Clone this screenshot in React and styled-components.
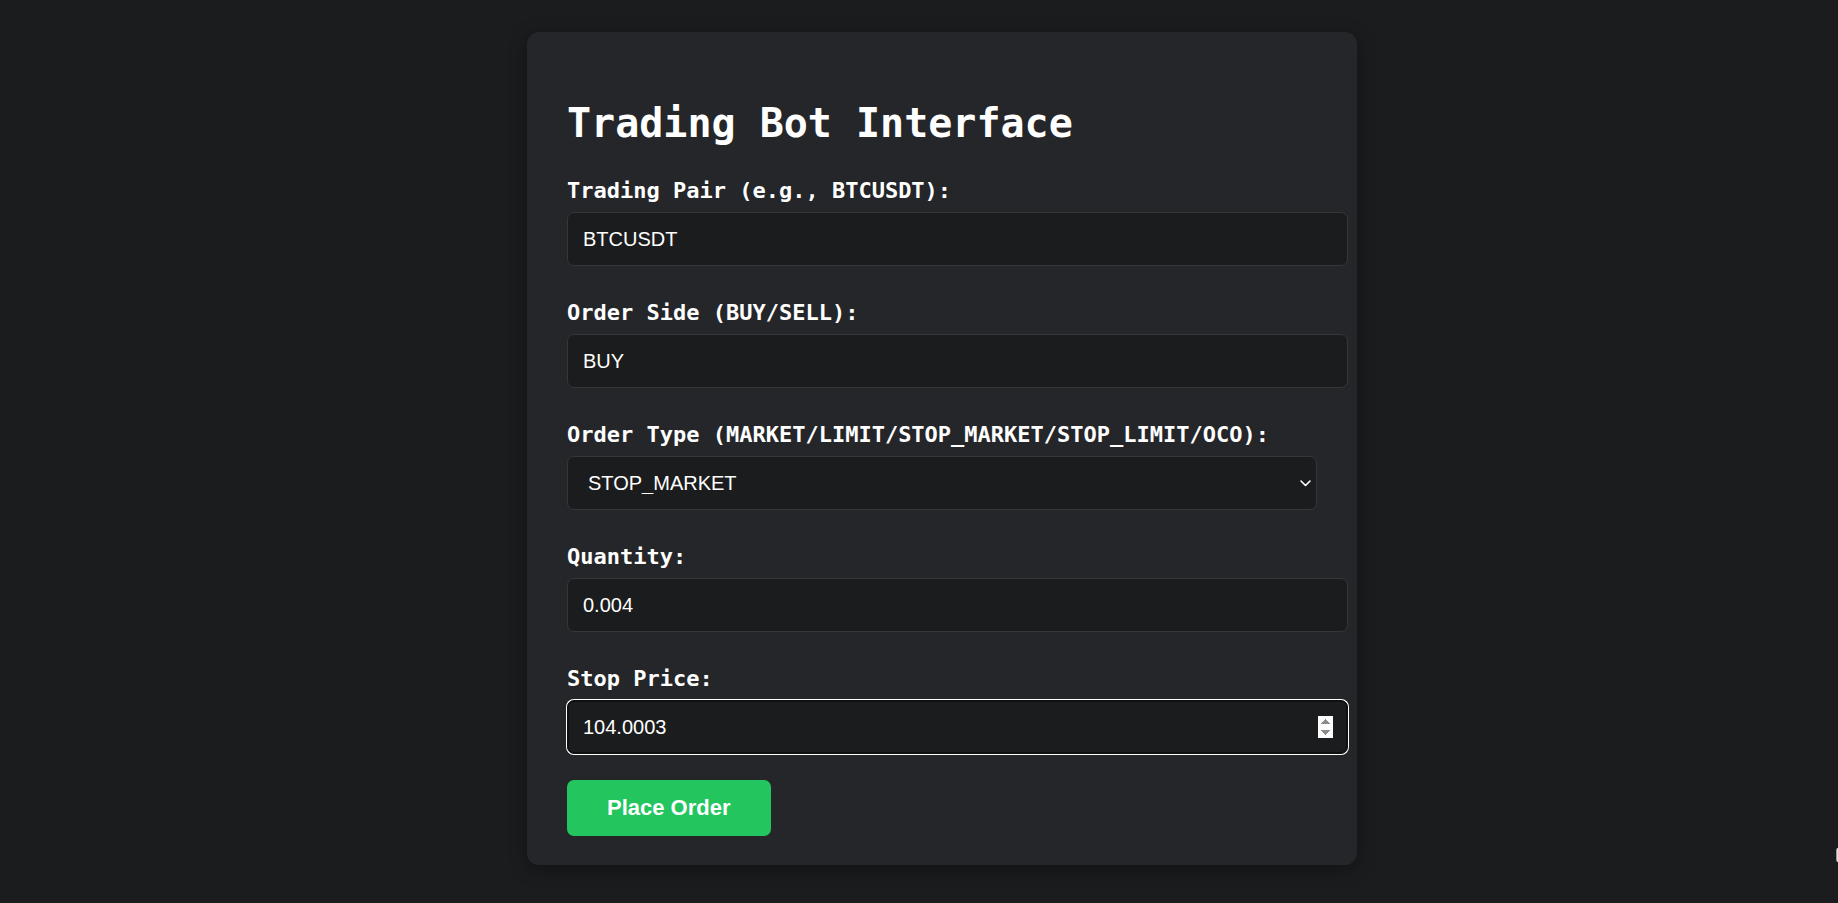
import React from "react";
import styled, { createGlobalStyle } from "styled-components";

const GlobalStyle = createGlobalStyle`
  html, body {
    margin: 0;
    padding: 0;
    background: #1b1c1e;
  }
  body {
    font-family: "Liberation Sans", Arial, sans-serif;
  }
`;

const Page = styled.main`
  min-height: 100vh;
  box-sizing: border-box;
  display: flex;
  justify-content: center;
  align-items: flex-start;
  padding: 32px 0 0 46px;
`;

const Card = styled.section`
  width: 830px;
  box-sizing: border-box;
  padding: 40px 40px 29px;
  background: #252629;
  border-radius: 12px;
  box-shadow: 0 4px 18px rgba(0, 0, 0, 0.35);
`;

const Title = styled.h1`
  margin: 27px 0 31px;
  font-family: "DejaVu Sans Mono", "Liberation Mono", monospace;
  font-weight: 700;
  font-size: 40px;
  line-height: 48px;
  color: #ffffff;
`;

const Field = styled.div`
  display: flex;
  flex-direction: column;
  margin-bottom: 34px;

  &:last-of-type {
    margin-bottom: 26px;
  }
`;

const Label = styled.label`
  display: block;
  margin-bottom: 8px;
  font-family: "DejaVu Sans Mono", "Liberation Mono", monospace;
  font-weight: 700;
  font-size: 22px;
  line-height: 26px;
  color: #ffffff;
`;

const Input = styled.input`
  display: block;
  width: 100%;
  height: 52px;
  box-sizing: content-box;
  margin: 0;
  padding: 0 14px 0 15px;
  font-family: "Liberation Sans", Arial, sans-serif;
  font-size: 20px;
  color: #ffffff;
  background: #1b1c1e;
  border: 1px solid ${(p) => (p.$focused ? "#101010" : "#36373b")};
  border-radius: 7px;
  outline: none;
  box-shadow: ${(p) =>
    p.$focused ? "0 0 0 1px #ffffff, inset 0 0 0 1px #101010" : "none"};
`;

const SelectWrap = styled.div`
  position: relative;
  width: 100%;
`;

const Select = styled.select`
  display: block;
  width: 100%;
  height: 54px;
  box-sizing: border-box;
  margin: 0;
  padding: 0 30px 0 20px;
  appearance: none;
  -webkit-appearance: none;
  font-family: "Liberation Sans", Arial, sans-serif;
  font-size: 20px;
  color: #ffffff;
  background: #1b1c1e;
  border: 1px solid #36373b;
  border-radius: 7px;
  outline: none;
`;

const Chevron = styled.svg`
  position: absolute;
  right: 6px;
  top: 50%;
  width: 11px;
  height: 7px;
  margin-top: -3px;
  pointer-events: none;
`;

const SubmitButton = styled.button`
  display: inline-block;
  height: 56px;
  padding: 0 40px;
  font-family: "Liberation Sans", Arial, sans-serif;
  font-weight: 700;
  font-size: 22px;
  color: #ffffff;
  background: #22c55e;
  border: none;
  border-radius: 7px;
  cursor: pointer;
`;

const EdgeSliver = styled.div`
  position: fixed;
  right: 0;
  top: 848px;
  width: 2px;
  height: 14px;
  border-radius: 2px 0 0 2px;
  background: linear-gradient(to right, rgba(255, 255, 255, 0.4), #ffffff);
`;

export default function App() {
  return (
    <>
      <GlobalStyle />
      <Page>
        <Card>
          <Title>Trading Bot Interface</Title>
          <form onSubmit={(e) => e.preventDefault()}>
            <Field>
              <Label htmlFor="pair">Trading Pair (e.g., BTCUSDT):</Label>
              <Input id="pair" type="text" defaultValue="BTCUSDT" />
            </Field>
            <Field>
              <Label htmlFor="side">Order Side (BUY/SELL):</Label>
              <Input id="side" type="text" defaultValue="BUY" />
            </Field>
            <Field>
              <Label htmlFor="type">
                Order Type (MARKET/LIMIT/STOP_MARKET/STOP_LIMIT/OCO):
              </Label>
              <SelectWrap>
                <Select id="type" defaultValue="STOP_MARKET">
                  <option value="MARKET">MARKET</option>
                  <option value="LIMIT">LIMIT</option>
                  <option value="STOP_MARKET">STOP_MARKET</option>
                  <option value="STOP_LIMIT">STOP_LIMIT</option>
                  <option value="OCO">OCO</option>
                </Select>
                <Chevron viewBox="0 0 11 7" aria-hidden="true">
                  <polyline
                    points="1,1 5.5,5.5 10,1"
                    fill="none"
                    stroke="#ffffff"
                    strokeWidth="1.6"
                    strokeLinecap="round"
                    strokeLinejoin="round"
                  />
                </Chevron>
              </SelectWrap>
            </Field>
            <Field>
              <Label htmlFor="qty">Quantity:</Label>
              <Input id="qty" type="text" defaultValue="0.004" />
            </Field>
            <Field>
              <Label htmlFor="stop">Stop Price:</Label>
              <Input
                id="stop"
                type="number"
                step="any"
                defaultValue="104.0003"
                $focused
                autoFocus
              />
            </Field>
            <SubmitButton type="submit">Place Order</SubmitButton>
          </form>
        </Card>
        <EdgeSliver />
      </Page>
    </>
  );
}
